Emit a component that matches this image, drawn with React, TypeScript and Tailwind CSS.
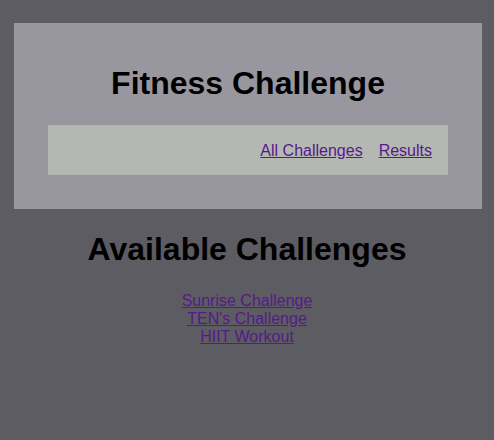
export default function App() {
  return (
    <div className="min-h-screen bg-[#5d5c62] pt-[23px] text-black" style={{ fontFamily: '"Liberation Sans", Arial, sans-serif' }}>
      <header className="ml-[14px] w-[468px] bg-[#98979f] px-[34px] pt-[42px] pb-[34px]">
        <h1 className="text-center text-[32px] font-bold leading-[37px]">Fitness Challenge</h1>
        <nav className="mt-[23px] flex h-[50px] items-center justify-end gap-4 bg-[#b5b7b2] pt-[2px] pr-4 text-[16px]">
          <a href="#" className="text-[#551a8b] underline">All Challenges</a>
          <a href="#" className="text-[#551a8b] underline">Results</a>
        </nav>
      </header>
      <main className="text-center">
        <h2 className="mt-[22px] text-[32px] font-bold leading-[37px]">Available Challenges</h2>
        <div className="mt-[24px] flex flex-col items-center text-[16px] leading-[18px]">
          <a href="#" className="text-[#551a8b] underline">Sunrise Challenge</a>
          <a href="#" className="text-[#551a8b] underline">TEN's Challenge</a>
          <a href="#" className="text-[#551a8b] underline">HIIT Workout</a>
        </div>
      </main>
    </div>
  );
}
